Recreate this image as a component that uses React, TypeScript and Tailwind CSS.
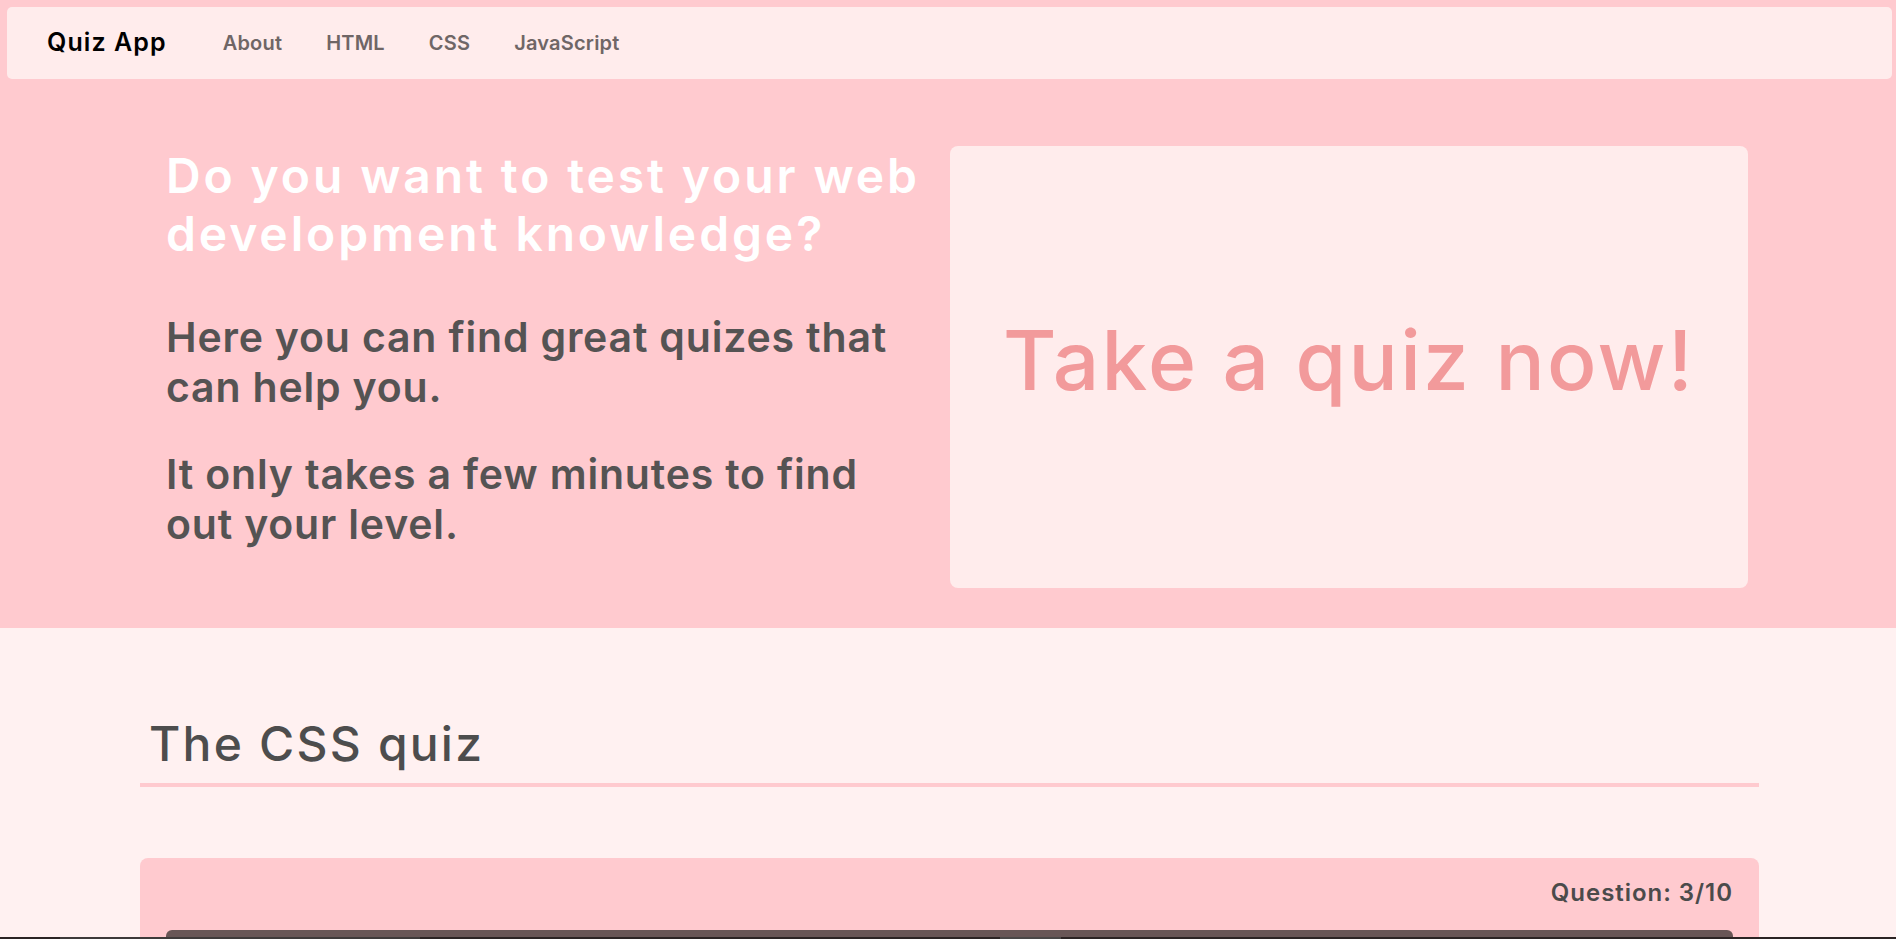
const links = ['About', 'HTML', 'CSS', 'JavaScript'];

const App = () => {
  return (
    <div
      className="h-[939px] overflow-hidden bg-[#fff1f1]"
      style={{ fontFamily: 'Inter, "Open Sans", sans-serif' }}
    >
      {/* Hero */}
      <section className="bg-[#ffcacf] pt-[7px] pb-[40px]">
        <nav className="ml-[7px] mr-[4px] h-[72px] rounded-[5px] bg-[#ffecec] flex items-center pl-[40px]">
          <span className="text-[25px] font-semibold text-black tracking-[0.043em]">Quiz App</span>
          <ul className="flex items-center ml-[34px]">
            {links.map((link) => (
              <li key={link}>
                <a className="px-[22px] text-[20px] font-semibold text-[#6f6666] tracking-[0.01em]">{link}</a>
              </li>
            ))}
          </ul>
        </nav>

        <div className="w-[1600px] mx-auto mt-[67px] grid grid-cols-[792px_1fr] gap-[10px]">
          <div className="pl-[18px] pr-[14px] pt-[1px]">
            <h1 className="text-[48px] leading-[57.6px] font-semibold text-white tracking-[0.06em]">
              Do you want to test your web development knowledge?
            </h1>
            <p className="mt-[50px] text-[41px] leading-[50px] font-semibold text-[#555353] tracking-[0.02em]">
              Here you can find great quizes that can help you.
            </p>
            <p className="mt-[37px] text-[41px] leading-[50px] font-semibold text-[#555353] tracking-[0.02em]">
              It only takes a few minutes to find out your level.
            </p>
          </div>
          <div className="h-[442px] rounded-[8px] bg-[#ffecec] flex items-center justify-center pb-[14px]">
            <span className="text-[82px] font-medium text-[#f29a9b] tracking-[0.028em]">Take a quiz now!</span>
          </div>
        </div>
      </section>

      {/* Quiz */}
      <section className="ml-[140px] w-[1619px] pt-[87px]">
        <h2 className="pl-[9px] pb-[10px] border-b-4 border-[#ffcacf] text-[48px] leading-[57.6px] font-medium text-[#4d4d4d] tracking-[0.046em]">
          The CSS quiz
        </h2>
        <div className="mt-[71px] rounded-[8px] bg-[#ffcacf] px-[26px] pt-[20px]">
          <p className="text-right text-[24px] leading-[29px] font-semibold text-[#4b4b4b] tracking-[0.04em]">
            Question: 3/10
          </p>
          <div className="mt-[23px] h-[200px] rounded-t-[6px] bg-[#685656]" />
        </div>
      </section>

      {/* bottom strip */}
      <div className="fixed bottom-0 left-0 right-0 h-[2px] flex bg-[#2b2424]">
        <div className="ml-[60px] w-[360px] bg-[#3e3a3a]" />
        <div className="ml-[580px] w-[61px] bg-[#4a4747]" />
      </div>
    </div>
  );
};

export default App;
